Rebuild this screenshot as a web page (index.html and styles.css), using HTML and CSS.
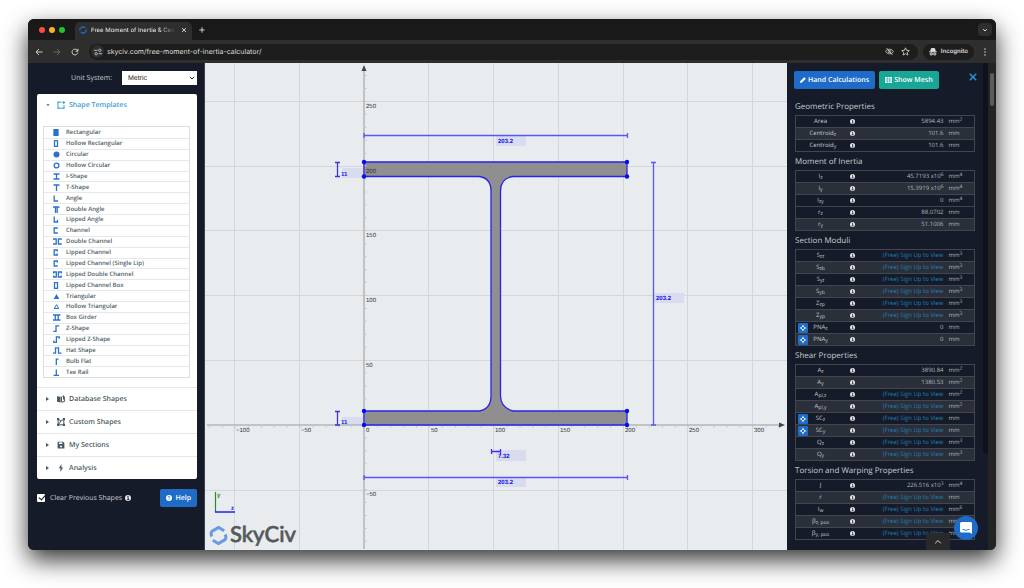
FILE: index.html
```html
<!DOCTYPE html>
<html lang="en">
<head>
  <meta charset="UTF-8">
  <meta name="viewport" content="width=device-width, initial-scale=1.0">
  <title>Free Moment of Inertia &amp; Centroid Calculator</title>
  <link rel="stylesheet" href="styles.css">
</head>
<body>
  <!-- icon sprite -->
  <svg class="sprite" width="0" height="0">
    <symbol id="info" viewBox="0 0 10 10"><circle cx="5" cy="5" r="5" fill="currentColor"/><path d="M4 4.500h1.500v3M3.500 7.700h3.500" stroke="#151b28" stroke-width="1.500" fill="none"/><circle cx="5" cy="2.300" r="1" fill="#151b28"/></symbol>
    <symbol id="pin" viewBox="0 0 10 10"><path d="M5 1v2M5 7v2M1 5h2M7 5h2" stroke="#fff"/><path d="M5 2.400L7.600 5 5 7.600 2.400 5z" fill="none" stroke="#fff" stroke-width="1.100"/></symbol>
    <symbol id="logo" viewBox="0 0 20 20"><path d="M3 11C1 7 3 5 6 4l4-2.500 6 3.500M17 9c2 4 0 6-3 7l-4 2.500-6-3.500" fill="none" stroke="currentColor" stroke-width="3.200"/></symbol>
    <symbol id="s-rect" viewBox="0 0 9 7"><path d="M1 0h4v7H1z" fill="currentColor"/></symbol>
    <symbol id="s-hrect" viewBox="0 0 9 7"><path d="M1.500 .7h3v5.600h-3z"/></symbol>
    <symbol id="s-circ" viewBox="0 0 9 7"><circle cx="3.500" cy="3.500" r="3" fill="currentColor" stroke="none"/></symbol>
    <symbol id="s-hcirc" viewBox="0 0 9 7"><circle cx="3.500" cy="3.500" r="2.400"/></symbol>
    <symbol id="s-i" viewBox="0 0 9 7"><path d="M.5 1h6M.5 6h6M3.500 1v5"/></symbol>
    <symbol id="s-t" viewBox="0 0 9 7"><path d="M.5 1h6M3.500 1v6"/></symbol>
    <symbol id="s-l" viewBox="0 0 9 7"><path d="M1.200 .5V6H5"/></symbol>
    <symbol id="s-dl" viewBox="0 0 9 7"><path d="M0 1h6.500M2.500 1v6M4.200 1v6"/></symbol>
    <symbol id="s-ll" viewBox="0 0 9 7"><path d="M1.200 .5V6h3.300V3.800"/></symbol>
    <symbol id="s-c" viewBox="0 0 9 7"><path d="M4.800 1H1.200v5h3.600"/></symbol>
    <symbol id="s-dc" viewBox="0 0 9 7"><path d="M0 1h3.200v5H0M8.800 1H5.400v5h3.400"/></symbol>
    <symbol id="s-lc" viewBox="0 0 9 7"><path d="M4.300 2.400V1H1.200v5h3.100V4.600"/></symbol>
    <symbol id="s-lc1" viewBox="0 0 9 7"><path d="M4.300 2.400V1H1.200v5h3.500"/></symbol>
    <symbol id="s-ldc" viewBox="0 0 9 7"><path d="M.6 2.500V1h2.700v5H.6V4.500M8.300 2.500V1H5.400v5h2.900V4.500"/></symbol>
    <symbol id="s-tri" viewBox="0 0 9 7"><path d="M3.500 1L6.300 6H.7z" fill="currentColor" stroke="none"/></symbol>
    <symbol id="s-htri" viewBox="0 0 9 7"><path d="M3.500 1.700L5.800 5.500H1.200z" stroke-width="1"/></symbol>
    <symbol id="s-box" viewBox="0 0 9 7"><path d="M0 1h7.500M0 6h7.500M2.300 1v5M5.200 1v5"/></symbol>
    <symbol id="s-z" viewBox="0 0 9 7"><path d="M.3 6.300H3V.8h3.300"/></symbol>
    <symbol id="s-lz" viewBox="0 0 9 7"><path d="M.8 4.500v1.800H3.400V.8h2.800v2"/></symbol>
    <symbol id="s-hat" viewBox="0 0 9 7"><path d="M0 6.200h2.500V.8h3v5.400h3"/></symbol>
    <symbol id="s-bulb" viewBox="0 0 9 7"><path d="M3.300 7V1.200h2.200"/></symbol>
    <symbol id="s-tee" viewBox="0 0 9 7"><path d="M3.300 .5V6M.5 6.300h5.500"/></symbol>
  </svg>

  <div class="window">
    <div class="tab-bar">
      <span class="dot red"></span><span class="dot yellow"></span><span class="dot green"></span>
      <div class="tab">
        <svg class="tab-logo"><use href="#logo"/></svg>
        <span class="tab-title">Free Moment of Inertia &amp; Cen</span>
        <button class="plain" aria-label="Close tab"><svg class="ic6" viewBox="0 0 6 6"><path d="M1 1l4 4M5 1L1 5"/></svg></button>
      </div>
      <button class="plain new-tab" aria-label="New tab"><svg class="ic6" viewBox="0 0 6 6"><path d="M3 .3v5.400M.3 3h5.400"/></svg></button>
      <button class="tab-search" aria-label="Search tabs"><svg class="ic6" viewBox="0 0 6 6"><path d="M1.200 2.200L3 4l1.800-1.800"/></svg></button>
    </div>

    <div class="toolbar">
      <button class="plain" aria-label="Back"><svg class="ic8" viewBox="0 0 8 8"><path d="M7.500 4H1.200M4 1L1 4l3 3"/></svg></button>
      <button class="plain dim" aria-label="Forward"><svg class="ic8" viewBox="0 0 8 8"><path d="M.5 4h6.300M4 1l3 3-3 3"/></svg></button>
      <button class="plain" aria-label="Reload"><svg class="ic8" viewBox="0 0 8 8"><path d="M6.800 4.500A2.900 2.900 0 1 1 6 2l.8 1M7 .8v2.400H4.600"/></svg></button>
      <div class="address">
        <span class="site-info"><svg class="ic8" viewBox="0 0 8 8"><path d="M0 2.300h3.500M4.500 5.700H8"/><circle cx="5.800" cy="2.300" r="1.200"/><circle cx="2.200" cy="5.700" r="1.200"/></svg></span>
        <input class="url" type="text" aria-label="Address" value="skyciv.com/free-moment-of-inertia-calculator/">
        <svg class="ic9" viewBox="0 0 9 9"><path d="M.6 4.500C2 1.500 7 1.500 8.400 4.500 7 7.500 2 7.500 .6 4.500zM1.500 1l6 7"/><circle cx="4.500" cy="4.500" r="1.300"/></svg>
        <svg class="ic9" viewBox="0 0 9 9"><path d="M4.500 .8l1.100 2.500 2.700.3-2 1.800.6 2.700-2.400-1.400-2.400 1.400.6-2.700-2-1.800 2.700-.3z"/></svg>
      </div>
      <div class="incognito">
        <svg class="ic8" viewBox="0 0 8 8"><path d="M2.300 .6h3.400l.5 2.600H1.800z" fill="currentColor"/><path d="M.2 3.800h7.600M3.300 6h1.400"/><circle cx="2.200" cy="6" r="1.100"/><circle cx="5.800" cy="6" r="1.100"/></svg>
        Incognito
      </div>
      <button class="plain menu" aria-label="Menu"><svg class="ic8" viewBox="0 0 8 8"><g fill="currentColor" stroke="none"><circle cx="4" cy="1" r=".8"/><circle cx="4" cy="4" r=".8"/><circle cx="4" cy="7" r=".8"/></g></svg></button>
    </div>

    <div class="page">
      <div class="sidebar">
        <div class="units">
          <label for="units">Unit System:</label>
          <div class="select-wrap">
            <select id="units"><option>Metric</option><option>Imperial</option></select>
            <svg class="ic6" viewBox="0 0 6 6"><path d="M.8 1.800L3 4l2.200-2.200"/></svg>
          </div>
        </div>

        <div class="panel">
          <button class="section-head open"><span class="caret down"></span>
            <svg class="ic8" viewBox="0 0 8 8"><path d="M4.500 1.200H1v6h6V4M.3 1.200h1.400M.3 7.200h1.400M6.300 7.200h1.400M6.800 0v3M5.300 1.500h3"/></svg>Shape Templates</button>
          <ul class="shapes">
            <li><svg><use href="#s-rect"/></svg>Rectangular</li>
            <li><svg><use href="#s-hrect"/></svg>Hollow Rectangular</li>
            <li><svg><use href="#s-circ"/></svg>Circular</li>
            <li><svg><use href="#s-hcirc"/></svg>Hollow Circular</li>
            <li><svg><use href="#s-i"/></svg>I-Shape</li>
            <li><svg><use href="#s-t"/></svg>T-Shape</li>
            <li><svg><use href="#s-l"/></svg>Angle</li>
            <li><svg><use href="#s-dl"/></svg>Double Angle</li>
            <li><svg><use href="#s-ll"/></svg>Lipped Angle</li>
            <li><svg><use href="#s-c"/></svg>Channel</li>
            <li><svg><use href="#s-dc"/></svg>Double Channel</li>
            <li><svg><use href="#s-lc"/></svg>Lipped Channel</li>
            <li><svg><use href="#s-lc1"/></svg>Lipped Channel (Single Lip)</li>
            <li><svg><use href="#s-ldc"/></svg>Lipped Double Channel</li>
            <li><svg><use href="#s-hrect"/></svg>Lipped Channel Box</li>
            <li><svg><use href="#s-tri"/></svg>Triangular</li>
            <li><svg><use href="#s-htri"/></svg>Hollow Triangular</li>
            <li><svg><use href="#s-box"/></svg>Box Girder</li>
            <li><svg><use href="#s-z"/></svg>Z-Shape</li>
            <li><svg><use href="#s-lz"/></svg>Lipped Z-Shape</li>
            <li><svg><use href="#s-hat"/></svg>Hat Shape</li>
            <li><svg><use href="#s-bulb"/></svg>Bulb Flat</li>
            <li><svg><use href="#s-tee"/></svg>Tee Rail</li>
          </ul>
          <button class="section-head"><span class="caret"></span>
            <svg class="ic8" viewBox="0 0 8 8"><path d="M0 1.200l3.600.6v5.600L0 6.800z" fill="currentColor" stroke="none"/><path d="M4.500 7V2l1.200-.5M7.400 1.500v5.200l-2.900.4M6.500 .5v4"/></svg>Database Shapes</button>
          <button class="section-head"><span class="caret"></span>
            <svg class="ic8" viewBox="0 0 8 8"><path d="M1.200 1.200L4 3l2.800-1.800v5.600H1.200zM4 3l-2.800 3.800"/><path d="M0 0h2.200v2.200H0zM5.800 0H8v2.200H5.800zM0 5.800h2.200V8H0zM5.800 5.800H8V8H5.800z" fill="currentColor" stroke="none"/></svg>Custom Shapes</button>
          <button class="section-head"><span class="caret"></span>
            <svg class="ic8" viewBox="0 0 8 8"><path d="M.6 .8h5.600l1.200 1.200v5.400H.6z" fill="currentColor" stroke="none"/><path d="M2 1.400h3.300v1.600H2z" fill="#fff" stroke="none"/><circle cx="4" cy="5.400" r="1" fill="#fff" stroke="none"/></svg>My Sections</button>
          <button class="section-head"><span class="caret"></span>
            <svg class="ic8" viewBox="0 0 8 8"><path d="M4.500 0L1.800 4.300h1.700L3.300 8l2.900-4.600H4.400z" fill="currentColor" stroke="none"/></svg>Analysis</button>
        </div>

        <div class="sidebar-foot">
          <label class="clear"><input type="checkbox" checked>Clear Previous Shapes <svg class="info"><use href="#info"/></svg></label>
          <button class="btn help"><svg class="ic6" viewBox="0 0 6 6"><circle cx="3" cy="3" r="3" fill="#fff" stroke="none"/><path d="M2.100 2.300c0-1.200 1.800-1.100 1.800 0 0 .7-.9.700-.9 1.300M3 4.200v.7" stroke="#1f6bc8" stroke-width=".8"/></svg>Help</button>
        </div>
      </div>

      <div class="canvas">
        <svg viewBox="0 0 582 487" preserveAspectRatio="xMidYMid slice">
          <path class="grid" d="M29.500 0v487M94.500 0v487M223.500 0v487M288.500 0v487M353.500 0v487M418.500 0v487M482.500 0v487M547.500 0v487M0 38.500h582M0 103.500h582M0 167.500h582M0 232.500h582M0 297.500h582M0 427.500h582"/>
          <!-- I-section -->
          <path class="section" d="M159 99H422V113.500H308Q295.500 115 295.500 128V333Q296 345 308 348H422V362H159V348H274Q286 346 286 333V128Q286 115 274 113.500H159Z"/>
          <g class="hint">
            <path d="M291 73h30v10h-30zM137 105h22v10h-22zM137 354h22v8h-22zM449 230h30v10h-30zM291 387h30v11h-30zM291 414h30v10h-30z"/>
          </g>
          <!-- axes -->
          <path class="axis-y" d="M159 8V486"/>
          <path class="axis-x" d="M2 362H575"/>
          <path class="ticks" d="M160 12V486" stroke-dasharray="1 11.940"/>
          <path class="ticks" d="M4 363H575" stroke-dasharray="1 11.940"/>
          <path class="arrow" d="M159 2l2.500 6h-5zM580 362l-6-2.500v5z"/>
          <path class="outline" d="M159 99H422V113.500H308Q295.500 115 295.500 128V333Q296 345 308 348H422V362H159V348H274Q286 346 286 333V128Q286 115 274 113.500H159Z"/>
          <g class="node"><circle cx="159" cy="99" r="2.200"/><circle cx="159" cy="113.500" r="2.200"/><circle cx="422" cy="99" r="2.200"/><circle cx="422" cy="113.500" r="2.200"/><circle cx="159" cy="348" r="2.200"/><circle cx="159" cy="362" r="2.200"/><circle cx="422" cy="348" r="2.200"/><circle cx="422" cy="362" r="2.200"/></g>
          <!-- dimensions -->
          <path class="dim-line" d="M159 72.500H422.500M159 70v5M422.500 70v5M448.500 99V362M446 99.500h5M446 362h5M159 414.500H422.500M159 412v5M422.500 412v5"/>
          <path class="dim-line strong" d="M132.500 99v14M130 99.500h5M130 113.500h5M132.500 348v14M130 348.500h5M130 362h5M286 388.500h10M286.500 386v5M295.500 386v5"/>
          <g class="dim-text">
            <text x="293" y="80">203.2</text>
            <text x="136" y="113">11</text>
            <text x="136" y="361">11</text>
            <text x="451" y="237">203.2</text>
            <text x="293" y="395">7.32</text>
            <text x="293" y="421">203.2</text>
          </g>
          <g class="scale">
            <text x="161" y="45">250</text><text x="161" y="110">200</text><text x="161" y="174">150</text><text x="161" y="239">100</text><text x="161" y="304">50</text><text x="161" y="433">−50</text>
            <text x="31" y="369">−100</text><text x="96" y="369">−50</text><text x="161" y="369">0</text><text x="226" y="369">50</text><text x="290" y="369">100</text><text x="355" y="369">150</text><text x="420" y="369">200</text><text x="484" y="369">250</text><text x="549" y="369">300</text>
          </g>
          <!-- local axes -->
          <path d="M10.500 429v20" stroke="#2f862f" stroke-width="1.200"/>
          <path d="M10 449h20" stroke="#2222f0" stroke-width="1.500"/>
          <text x="12" y="434" class="mini" fill="#2f862f">y</text>
          <text x="26" y="447" class="mini" fill="#2222f0">z</text>
          <g class="brand"><use href="#logo" x="4" y="463" width="19" height="19"/><text x="25" y="479">SkyCiv</text></g>
        </svg>
      </div>

      <div class="results">
        <div class="results-head">
          <button class="btn"><svg class="ic6" viewBox="0 0 6 6"><path d="M0 6l.4-1.900L4.300 .2 5.800 1.700 1.900 5.600z" fill="#fff" stroke="none"/></svg>Hand Calculations</button>
          <button class="btn teal"><svg class="ic7" viewBox="0 0 7 6"><path d="M0 0h7v6H0z" fill="#fff" stroke="none"/><path d="M2.300 0v6M4.700 0v6M0 2h7M0 4h7" stroke="#18a697" stroke-width=".6"/></svg>Show Mesh</button>
          <button class="plain close" aria-label="Close"><svg class="ic8" viewBox="0 0 8 8"><path d="M.8 .8l6.400 6.400M7.200 .8L.8 7.200"/></svg></button>
        </div>

        <h3>Geometric Properties</h3>
        <table>
          <tr><td></td><th>Area</th><td><svg class="info"><use href="#info"/></svg></td><td>5894.43</td><td>mm<sup>2</sup></td></tr>
          <tr class="alt"><td></td><th>Centroid<sub>z</sub></th><td><svg class="info"><use href="#info"/></svg></td><td>101.6</td><td>mm</td></tr>
          <tr><td></td><th>Centroid<sub>y</sub></th><td><svg class="info"><use href="#info"/></svg></td><td>101.6</td><td>mm</td></tr>
        </table>

        <h3>Moment of Inertia</h3>
        <table>
          <tr><td></td><th>I<sub>z</sub></th><td><svg class="info"><use href="#info"/></svg></td><td>45.7193 x10<sup>6</sup></td><td>mm<sup>4</sup></td></tr>
          <tr class="alt"><td></td><th>I<sub>y</sub></th><td><svg class="info"><use href="#info"/></svg></td><td>15.3919 x10<sup>6</sup></td><td>mm<sup>4</sup></td></tr>
          <tr><td></td><th>I<sub>zy</sub></th><td><svg class="info"><use href="#info"/></svg></td><td>0</td><td>mm<sup>4</sup></td></tr>
          <tr><td></td><th>r<sub>z</sub></th><td><svg class="info"><use href="#info"/></svg></td><td>88.0702</td><td>mm</td></tr>
          <tr class="alt"><td></td><th>r<sub>y</sub></th><td><svg class="info"><use href="#info"/></svg></td><td>51.1006</td><td>mm</td></tr>
        </table>

        <h3>Section Moduli</h3>
        <table>
          <tr><td></td><th>S<sub>zt</sub></th><td><svg class="info"><use href="#info"/></svg></td><td><a href="#">(Free) Sign Up to View</a></td><td>mm<sup>3</sup></td></tr>
          <tr class="alt"><td></td><th>S<sub>zb</sub></th><td><svg class="info"><use href="#info"/></svg></td><td><a href="#">(Free) Sign Up to View</a></td><td>mm<sup>3</sup></td></tr>
          <tr><td></td><th>S<sub>yt</sub></th><td><svg class="info"><use href="#info"/></svg></td><td><a href="#">(Free) Sign Up to View</a></td><td>mm<sup>3</sup></td></tr>
          <tr class="alt"><td></td><th>S<sub>yb</sub></th><td><svg class="info"><use href="#info"/></svg></td><td><a href="#">(Free) Sign Up to View</a></td><td>mm<sup>3</sup></td></tr>
          <tr><td></td><th>Z<sub>zp</sub></th><td><svg class="info"><use href="#info"/></svg></td><td><a href="#">(Free) Sign Up to View</a></td><td>mm<sup>3</sup></td></tr>
          <tr class="alt"><td></td><th>Z<sub>yp</sub></th><td><svg class="info"><use href="#info"/></svg></td><td><a href="#">(Free) Sign Up to View</a></td><td>mm<sup>3</sup></td></tr>
          <tr><td><button class="pin" aria-label="Show"><svg><use href="#pin"/></svg></button></td><th>PNA<sub>z</sub></th><td><svg class="info"><use href="#info"/></svg></td><td>0</td><td>mm</td></tr>
          <tr class="alt"><td><button class="pin" aria-label="Show"><svg><use href="#pin"/></svg></button></td><th>PNA<sub>y</sub></th><td><svg class="info"><use href="#info"/></svg></td><td>0</td><td>mm</td></tr>
        </table>

        <h3>Shear Properties</h3>
        <table>
          <tr><td></td><th>A<sub>z</sub></th><td><svg class="info"><use href="#info"/></svg></td><td>3890.84</td><td>mm<sup>2</sup></td></tr>
          <tr class="alt"><td></td><th>A<sub>y</sub></th><td><svg class="info"><use href="#info"/></svg></td><td>1380.53</td><td>mm<sup>2</sup></td></tr>
          <tr><td></td><th>A<sub>pl,z</sub></th><td><svg class="info"><use href="#info"/></svg></td><td><a href="#">(Free) Sign Up to View</a></td><td>mm<sup>2</sup></td></tr>
          <tr class="alt"><td></td><th>A<sub>pl,y</sub></th><td><svg class="info"><use href="#info"/></svg></td><td><a href="#">(Free) Sign Up to View</a></td><td>mm<sup>2</sup></td></tr>
          <tr><td><button class="pin" aria-label="Show"><svg><use href="#pin"/></svg></button></td><th>SC<sub>z</sub></th><td><svg class="info"><use href="#info"/></svg></td><td><a href="#">(Free) Sign Up to View</a></td><td>mm</td></tr>
          <tr class="alt"><td><button class="pin" aria-label="Show"><svg><use href="#pin"/></svg></button></td><th>SC<sub>y</sub></th><td><svg class="info"><use href="#info"/></svg></td><td><a href="#">(Free) Sign Up to View</a></td><td>mm</td></tr>
          <tr><td></td><th>Q<sub>z</sub></th><td><svg class="info"><use href="#info"/></svg></td><td><a href="#">(Free) Sign Up to View</a></td><td>mm<sup>3</sup></td></tr>
          <tr class="alt"><td></td><th>Q<sub>y</sub></th><td><svg class="info"><use href="#info"/></svg></td><td><a href="#">(Free) Sign Up to View</a></td><td>mm<sup>3</sup></td></tr>
        </table>

        <h3>Torsion and Warping Properties</h3>
        <table>
          <tr><td></td><th>J</th><td><svg class="info"><use href="#info"/></svg></td><td>226.516 x10<sup>3</sup></td><td>mm<sup>4</sup></td></tr>
          <tr class="alt"><td></td><th>r</th><td><svg class="info"><use href="#info"/></svg></td><td><a href="#">(Free) Sign Up to View</a></td><td>mm</td></tr>
          <tr><td></td><th>I<sub>w</sub></th><td><svg class="info"><use href="#info"/></svg></td><td><a href="#">(Free) Sign Up to View</a></td><td>mm<sup>6</sup></td></tr>
          <tr class="alt"><td></td><th>β<sub>z, pos</sub></th><td><svg class="info"><use href="#info"/></svg></td><td><a href="#">(Free) Sign Up to View</a></td><td>mm</td></tr>
          <tr><td></td><th>β<sub>y, pos</sub></th><td><svg class="info"><use href="#info"/></svg></td><td><a href="#">(Free) Sign Up to View</a></td><td>mm</td></tr>
        </table>

        <div class="inner-scroll"></div>
        <button class="to-top" aria-label="Back to top"><svg class="ic8" viewBox="0 0 8 8"><path d="M1.200 5.300L4 2.500l2.800 2.800"/></svg></button>
        <button class="chat" aria-label="Chat"><svg viewBox="0 0 12 12"><path d="M1.500 0h9Q12 0 12 1.500V12L9.500 10.500h-8Q0 10.500 0 9V1.500Q0 0 1.500 0z" fill="#fff"/><path d="M2.500 7.200Q6 9.500 9.500 7.200" fill="none" stroke="#1f6bc8" stroke-width=".9"/></svg></button>
      </div>
      <div class="page-scroll"><div class="thumb"></div></div>
    </div>
  </div>
</body>
</html>
```

FILE: styles.css
```css
* {
  box-sizing: border-box;
}
body {
  margin: 0;
  padding: 19px 28px 38px;
  height: 100vh;
  background-color: #fff;
  font-family: 'Open Sans', 'Noto Sans', sans-serif;
  font-size: 7px;
  text-rendering: geometricPrecision;
  overflow: hidden;
}
.sprite {
  position: absolute;
}
button, input, select {
  font-family: inherit;
  text-rendering: inherit;
  border: 0;
  padding: 0;
  margin: 0;
}
svg {
  flex: none;
  fill: none;
  stroke: currentColor;
}
.ic6 { width: 6px; height: 6px; }
.ic7 { width: 7px; height: 6px; }
.ic8 { width: 8px; height: 8px; }
.ic9 { width: 9px; height: 9px; }
.plain {
  display: flex;
  background: none;
  color: #ccc;
}
.plain.dim {
  color: #666;
}

/* browser window */
.window {
  display: flex;
  flex-direction: column;
  height: 100%;
  border-radius: 6px;
  overflow: hidden;
  background-color: #151b28;
  box-shadow: 0 10px 24px rgba(0, 0, 0, 0.8);
}
.tab-bar {
  display: flex;
  align-items: center;
  height: 21px;
  padding: 0 4px 0 11px;
  background-color: #191919;
  font-family: Inter, sans-serif;
}
.dot {
  width: 6px;
  height: 6px;
  margin-right: 4px;
  border-radius: 50%;
}
.red { background-color: #fe4a45; }
.yellow { background-color: #fdb022; }
.green { background-color: #23c132; }
.tab {
  display: flex;
  align-items: center;
  align-self: flex-end;
  width: 117px;
  height: 18px;
  margin-left: 6px;
  padding: 0 5px 2px 4px;
  border-radius: 5px 5px 0 0;
  background-color: #2e2e2e;
  color: #ddd;
  font-size: 6px;
  font-weight: 500;
}
.tab-logo {
  width: 8px;
  height: 8px;
  margin-right: 4px;
  color: #1f6bc8;
}
.tab-title {
  flex: 1;
  white-space: nowrap;
  -webkit-mask-image: linear-gradient(to right, #000 75%, transparent 95%);
  mask-image: linear-gradient(to right, #000 75%, transparent 95%);
}
.new-tab {
  margin-left: 7px;
}
.tab-search {
  display: flex;
  align-items: center;
  justify-content: center;
  width: 14px;
  height: 13px;
  margin-left: auto;
  border-radius: 4px;
  background-color: #2e2e2e;
  color: #ddd;
}
.toolbar {
  display: flex;
  align-items: center;
  gap: 10px;
  height: 23px;
  padding: 0 7px;
  background-color: #2e2e2e;
  font-family: Inter, sans-serif;
}
.address {
  display: flex;
  flex: 1;
  align-items: center;
  gap: 7px;
  height: 16px;
  margin-right: -5px;
  padding: 0 8px 0 2px;
  border-radius: 8px;
  background-color: #1d1d1d;
  color: #bbb;
}
.site-info {
  display: flex;
  align-items: center;
  justify-content: center;
  width: 13px;
  height: 13px;
  margin-right: -4px;
  border-radius: 50%;
  background-color: #2e2e2e;
}
.url {
  flex: 1;
  min-width: 0;
  background: none;
  color: #ddd;
  font-size: 7px;
}
.incognito {
  display: flex;
  align-items: center;
  gap: 4px;
  height: 16px;
  padding: 0 6px;
  border-radius: 8px;
  background-color: #1d1d1d;
  color: #ddd;
  font-size: 6px;
  font-weight: 600;
}
.menu {
  margin-left: -3px;
}
.page {
  display: flex;
  flex: 1;
  min-height: 0;
}

/* left sidebar */
.sidebar {
  width: 177px;
  padding: 8px 7px 0 9px;
  border-right: 1px solid #3a3f4a;
  background-color: #151b28;
  color: #c8cbd0;
}
.units {
  display: flex;
  align-items: center;
  justify-content: flex-end;
  gap: 10px;
  font-size: 7px;
  font-weight: 500;
}
.select-wrap {
  display: flex;
  align-items: center;
  width: 75px;
  height: 14px;
  padding-right: 2px;
  background-color: #fff;
  color: #222;
}
.select-wrap select {
  flex: 1;
  appearance: none;
  padding-left: 6px;
  background: none;
  color: #222;
  font-family: 'Liberation Sans', sans-serif;
  font-size: 7px;
}
.panel {
  margin-top: 9px;
  border-radius: 2px;
  background-color: #fff;
}
.section-head {
  display: flex;
  align-items: center;
  width: 100%;
  height: 23px;
  padding-left: 9px;
  border-top: 1px solid #e4e6e8;
  background: none;
  color: #4a5a62;
  font-size: 7px;
  font-weight: 600;
}
.section-head.open {
  height: 22px;
  border-top: 0;
  color: #3d9bd0;
}
.section-head svg {
  margin-right: 4px;
}
.caret {
  width: 3px;
  height: 4px;
  margin-right: 8px;
  background-color: currentColor;
  clip-path: polygon(0 0, 100% 50%, 0 100%);
}
.caret.down {
  width: 4px;
  height: 3px;
  margin-right: 7px;
  clip-path: polygon(0 0, 100% 0, 50% 100%);
}
.shapes {
  display: flex;
  flex-direction: column;
  height: 252px;
  margin: 10px 7px 9px 6px;
  padding: 1px 0 0;
  border: 1px solid #ddd;
  list-style: none;
  color: #4f5e66;
  font-size: 6px;
  font-weight: 600;
}
.shapes li {
  display: flex;
  flex: 1;
  align-items: center;
  padding-left: 9px;
  line-height: 9px;
  border-bottom: 1px solid #e6e8ea;
}
.shapes li:last-child {
  border-bottom: 0;
}
.shapes svg {
  width: 9px;
  height: 7px;
  margin-right: 4px;
  color: #2a72cc;
  stroke-width: 1.3;
}
.sidebar-foot {
  display: flex;
  align-items: center;
  justify-content: space-between;
  margin-top: 10px;
}
.clear {
  display: flex;
  align-items: center;
  font-size: 7px;
}
.clear input {
  appearance: none;
  width: 8px;
  height: 8px;
  margin-right: 5px;
  border-radius: 1px;
  background-color: #fff;
}
.clear input::after {
  content: "";
  display: block;
  width: 3px;
  height: 5px;
  margin: 0 0 0 3px;
  border: solid #111;
  border-width: 0 1px 1px 0;
  transform: rotate(40deg);
}
.info {
  display: block;
  width: 5px;
  height: 5px;
  color: #e8e8e8;
  stroke: none;
}
.clear .info {
  width: 6px;
  height: 6px;
  margin-left: 3px;
}
.btn {
  display: flex;
  align-items: center;
  gap: 2px;
  height: 18px;
  padding: 0 6px;
  border-radius: 2px;
  background-color: #1f6bc8;
  color: #fff;
  font-size: 7px;
  font-weight: 600;
  white-space: nowrap;
}
.btn.teal {
  background-color: #18a697;
}
.btn.help {
  gap: 3px;
}

/* drawing area */
.canvas {
  flex: 1;
  min-width: 0;
  background-color: #e8ecef;
}
.canvas svg {
  display: block;
  width: 100%;
  height: 100%;
  stroke: none;
}
.grid { stroke: #d3d7da; }
.section { fill: #8f8f8f; }
.outline { fill: none; stroke: #2a22ea; stroke-width: 1.3; }
.axis-y { stroke: #b2b5b7; stroke-width: 1.5; }
.axis-x { stroke: #999c9e; }
.ticks { stroke: #c3c6c8; stroke-width: 3; }
.arrow { fill: #444; }
.node { fill: #0a0af0; }
.hint { fill: #d9dbee; }
.dim-line { stroke: #5a55fa; stroke-width: 1.3; }
.dim-line.strong { stroke: #3a34ec; }
.dim-text {
  fill: #1414f0;
  font: bold 6px 'Liberation Sans', sans-serif;
}
.scale {
  fill: #333;
  font: 6px 'Liberation Sans', sans-serif;
}
.mini {
  font: bold 6px 'Liberation Sans', sans-serif;
}
.brand {
  color: #6a9ae0;
}
.brand text {
  fill: #55585a;
  stroke: #55585a;
  stroke-width: 0.6;
  font: 500 22px Lato, sans-serif;
}

/* results panel */
.results {
  position: relative;
  width: 201px;
  padding: 8px 13px 0 7px;
  background-color: #151b28;
  color: #b4b8be;
  overflow: hidden;
}
.results-head {
  display: flex;
  gap: 4px;
  margin-bottom: 8px;
}
.close {
  align-self: flex-start;
  margin: 2px -2px 0 auto;
  color: #2b92d0;
}
.close svg {
  stroke-width: 1.5;
}
.results h3 {
  margin: 0 0 0 1px;
  padding-top: 2px;
  color: #c8cbd0;
  font-size: 8px;
  font-weight: 400;
  line-height: 16px;
}
.results table {
  width: 180px;
  margin-left: 1px;
  border-collapse: collapse;
  border: 1px solid #41464f;
  table-layout: fixed;
  font-size: 6px;
}
.results tr {
  border-bottom: 1px solid #41464f;
}
.results .alt {
  background-color: #2a2f3a;
}
.results td, .results th {
  height: 12px;
  padding: 0;
  line-height: 11px;
  font-weight: 400;
  white-space: nowrap;
}
.results th {
  color: #c8cbd0;
}
.results td:nth-child(1) { width: 14px; padding-left: 2px; }
.results th:nth-child(2) { width: 22px; }
.results td:nth-child(3) { width: 42px; }
.results td:nth-child(3) .info { margin: 0 auto; }
.results td:nth-child(4) { width: 70px; text-align: right; }
.results td:nth-child(5) { padding-left: 5px; }
.results a {
  color: #2180b4;
  text-decoration: none;
}
sub, sup {
  font-size: 5px;
  line-height: 0;
}
sub { vertical-align: -1px; }
sup { vertical-align: 2px; }
.pin {
  display: block;
  width: 10px;
  height: 10px;
  border-radius: 1px;
  background-color: #1f6bc8;
}
.pin svg {
  display: block;
  width: 8px;
  height: 8px;
  margin: 0 auto;
}
.inner-scroll {
  position: absolute;
  top: 0;
  right: 0;
  width: 5px;
  height: 80%;
  background-color: #0d121d;
}
.to-top {
  position: absolute;
  right: 38px;
  bottom: 0;
  display: flex;
  align-items: center;
  justify-content: center;
  width: 24px;
  height: 17px;
  background-color: #292929;
  color: #ddd;
}
.chat {
  position: absolute;
  right: 10px;
  bottom: 10px;
  display: flex;
  align-items: center;
  justify-content: center;
  width: 24px;
  height: 24px;
  border-radius: 50%;
  background-color: #1f6bc8;
}
.chat svg {
  width: 12px;
  height: 12px;
  stroke: none;
}
.page-scroll {
  width: 8px;
  padding: 10px 2px;
  background-color: #242424;
}
.thumb {
  height: 33px;
  border-radius: 2px;
  background-color: #5c5c5c;
}
```
